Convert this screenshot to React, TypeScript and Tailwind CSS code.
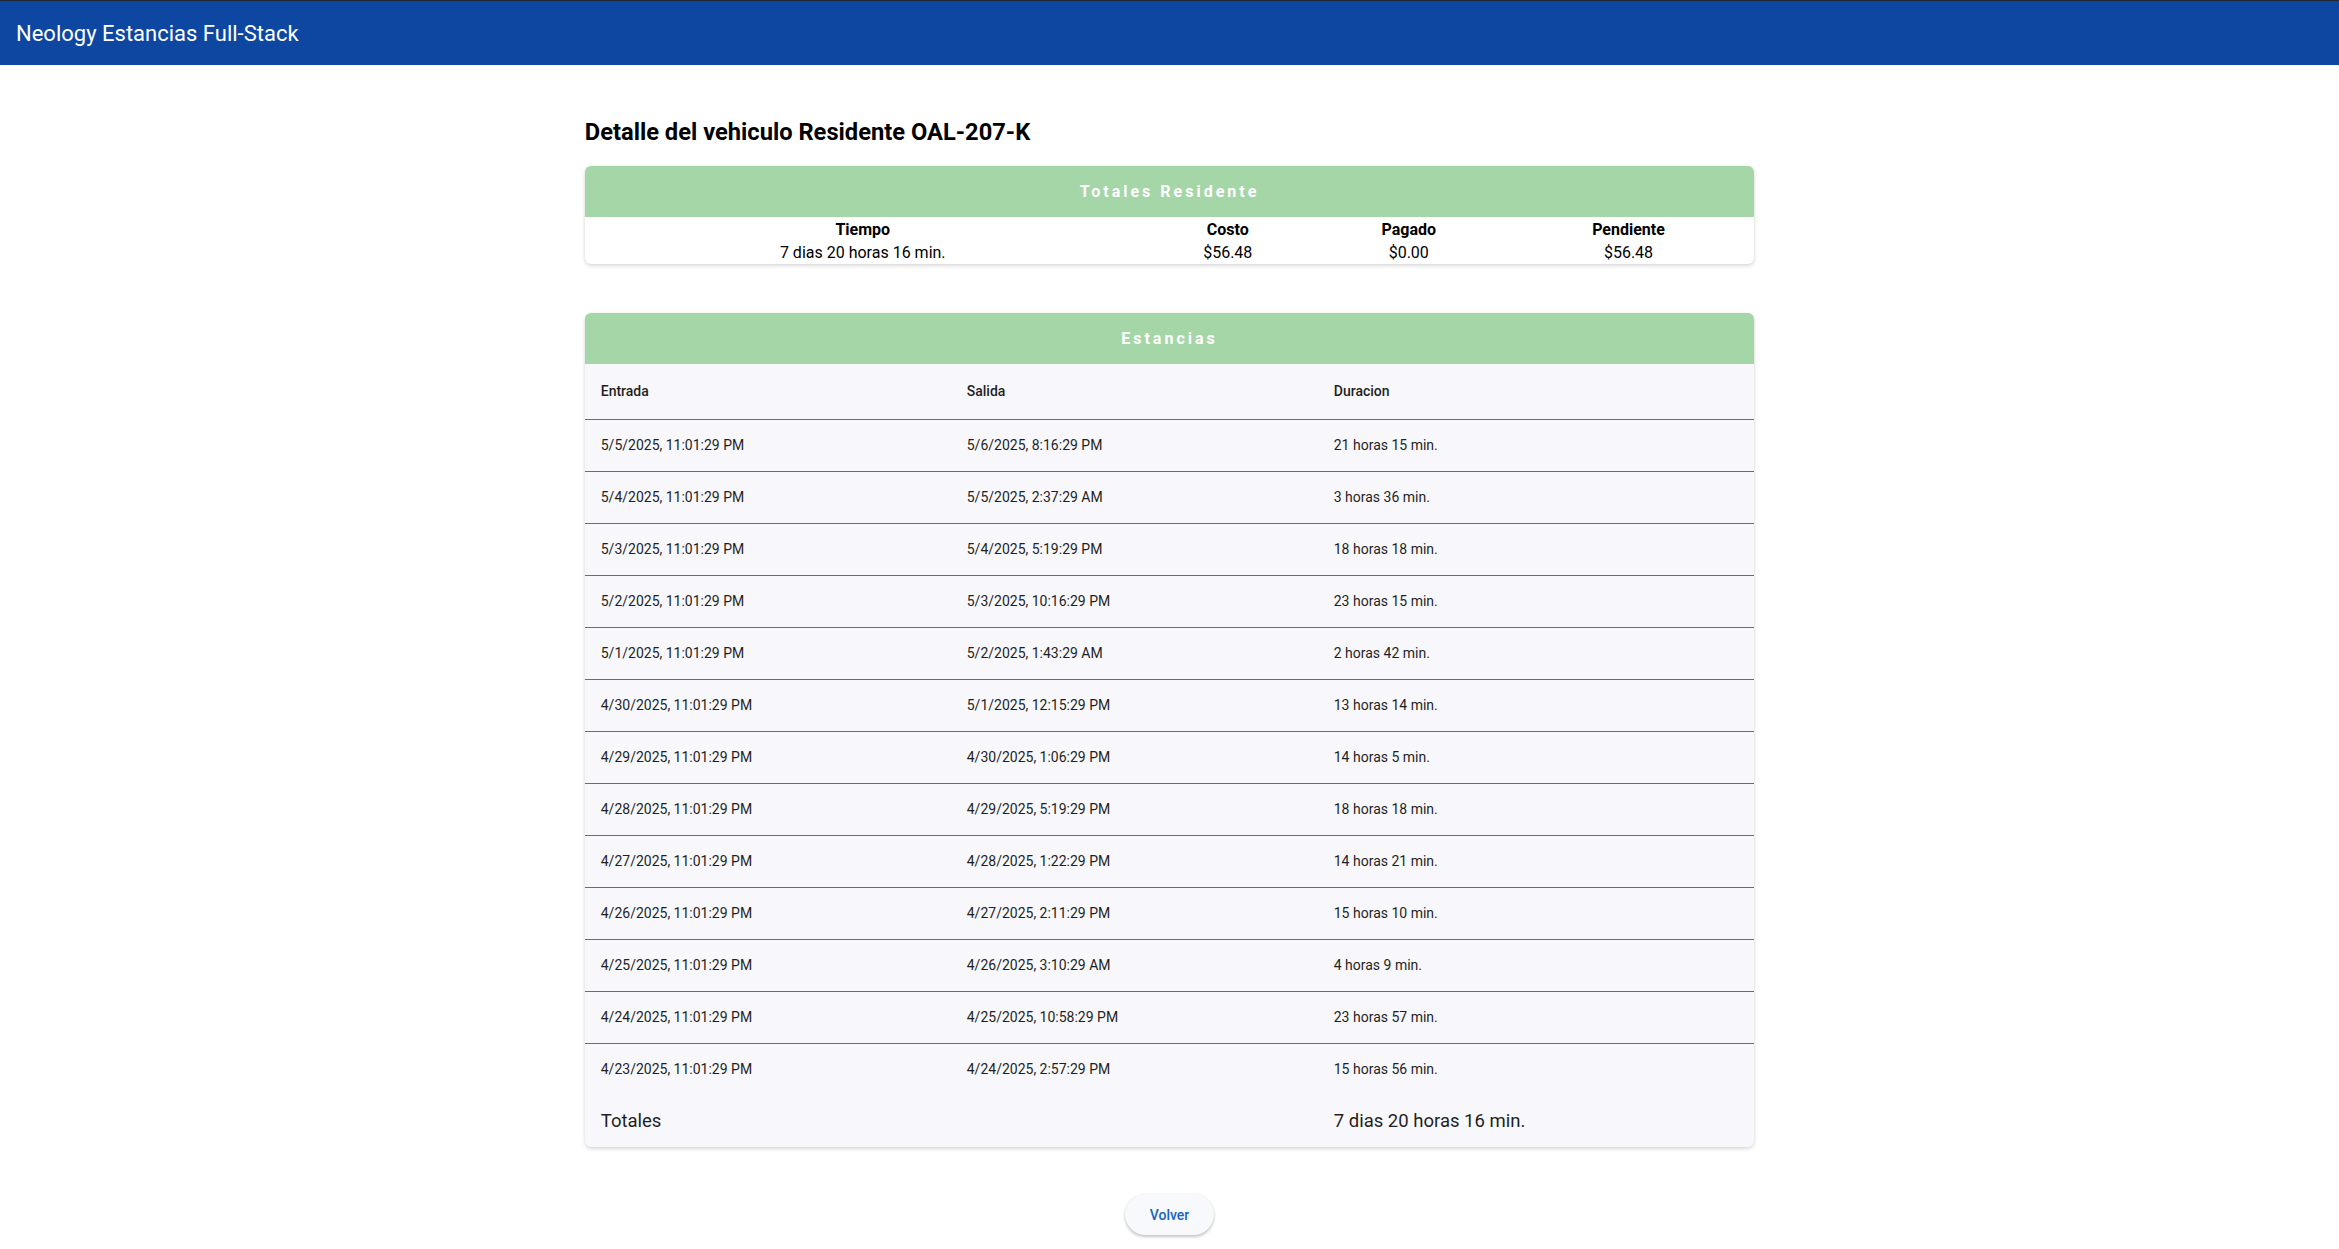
import React from 'react';

type Estancia = {
  entrada: string;
  salida: string;
  duracion: string;
};

const estancias: Estancia[] = [
  { entrada: '5/5/2025, 11:01:29 PM', salida: '5/6/2025, 8:16:29 PM', duracion: '21 horas 15 min.' },
  { entrada: '5/4/2025, 11:01:29 PM', salida: '5/5/2025, 2:37:29 AM', duracion: '3 horas 36 min.' },
  { entrada: '5/3/2025, 11:01:29 PM', salida: '5/4/2025, 5:19:29 PM', duracion: '18 horas 18 min.' },
  { entrada: '5/2/2025, 11:01:29 PM', salida: '5/3/2025, 10:16:29 PM', duracion: '23 horas 15 min.' },
  { entrada: '5/1/2025, 11:01:29 PM', salida: '5/2/2025, 1:43:29 AM', duracion: '2 horas 42 min.' },
  { entrada: '4/30/2025, 11:01:29 PM', salida: '5/1/2025, 12:15:29 PM', duracion: '13 horas 14 min.' },
  { entrada: '4/29/2025, 11:01:29 PM', salida: '4/30/2025, 1:06:29 PM', duracion: '14 horas 5 min.' },
  { entrada: '4/28/2025, 11:01:29 PM', salida: '4/29/2025, 5:19:29 PM', duracion: '18 horas 18 min.' },
  { entrada: '4/27/2025, 11:01:29 PM', salida: '4/28/2025, 1:22:29 PM', duracion: '14 horas 21 min.' },
  { entrada: '4/26/2025, 11:01:29 PM', salida: '4/27/2025, 2:11:29 PM', duracion: '15 horas 10 min.' },
  { entrada: '4/25/2025, 11:01:29 PM', salida: '4/26/2025, 3:10:29 AM', duracion: '4 horas 9 min.' },
  { entrada: '4/24/2025, 11:01:29 PM', salida: '4/25/2025, 10:58:29 PM', duracion: '23 horas 57 min.' },
  { entrada: '4/23/2025, 11:01:29 PM', salida: '4/24/2025, 2:57:29 PM', duracion: '15 horas 56 min.' },
];

const CardHeader: React.FC<{ title: string }> = ({ title }) => (
  <div className="h-[51px] flex items-center justify-center bg-[#a5d6a7] text-white font-bold text-base tracking-[3px]">
    {title}
  </div>
);

const App: React.FC = () => {
  return (
    <div className="min-h-screen bg-white text-[#1f1f1f] font-['Roboto',_'Liberation_Sans',_sans-serif]">
      <header className="h-[65px] flex items-center px-4 bg-[#0d47a1] border-t border-[#222831] text-white text-[22px]">
        Neology Estancias Full-Stack
      </header>

      <main className="w-1/2 mx-auto pb-10">
        <h1 className="mt-[51px] mb-[18px] text-[23.7px] leading-8 font-bold text-black">
          Detalle del vehiculo Residente OAL-207-K
        </h1>

        <section className="rounded-md overflow-hidden bg-white shadow-[0_2px_4px_rgba(0,0,0,0.14),0_0_2px_rgba(0,0,0,0.08)]">
          <CardHeader title="Totales Residente" />
          <table className="w-full table-fixed text-center text-base leading-[23px] text-black">
            <thead>
              <tr>
                <th className="w-[556px] pt-px font-bold">Tiempo</th>
                <th className="w-[174px] pt-px font-bold">Costo</th>
                <th className="w-[188px] pt-px font-bold">Pagado</th>
                <th className="pt-px font-bold">Pendiente</th>
              </tr>
            </thead>
            <tbody>
              <tr>
                <td>7 dias 20 horas 16 min.</td>
                <td>$56.48</td>
                <td>$0.00</td>
                <td>$56.48</td>
              </tr>
            </tbody>
          </table>
        </section>

        <section className="mt-[49px] rounded-md overflow-hidden bg-[#f8f8fc] shadow-[0_2px_4px_rgba(0,0,0,0.14),0_0_2px_rgba(0,0,0,0.08)]">
          <CardHeader title="Estancias" />
          <table className="w-full table-fixed border-collapse text-left text-sm text-[#1f1f1f]">
            <thead>
              <tr className="border-b border-[#6b6b73]">
                <th className="w-[366px] h-[55px] px-4 font-medium">Entrada</th>
                <th className="w-[367px] h-[55px] px-4 font-medium">Salida</th>
                <th className="h-[55px] px-4 font-medium">Duracion</th>
              </tr>
            </thead>
            <tbody>
              {estancias.map((e, i) => (
                <tr key={e.entrada} className={i < estancias.length - 1 ? 'border-b border-[#6b6b73]' : ''}>
                  <td className="h-[52px] px-4">{e.entrada}</td>
                  <td className="h-[52px] px-4">{e.salida}</td>
                  <td className="h-[52px] px-4">{e.duracion}</td>
                </tr>
              ))}
              <tr className="text-[18.5px]">
                <td className="h-[52px] px-4">Totales</td>
                <td className="h-[52px] px-4"></td>
                <td className="h-[52px] px-4">7 dias 20 horas 16 min.</td>
              </tr>
            </tbody>
          </table>
        </section>

        <div className="mt-[47px] flex justify-center">
          <button
            type="button"
            className="h-[41px] w-[89px] rounded-full bg-[#f8f9fd] text-[#1565c0] text-sm font-medium shadow-[0_2px_3px_rgba(0,0,0,0.22),0_0_2px_rgba(0,0,0,0.08)]"
          >
            Volver
          </button>
        </div>
      </main>
    </div>
  );
};

export default App;
